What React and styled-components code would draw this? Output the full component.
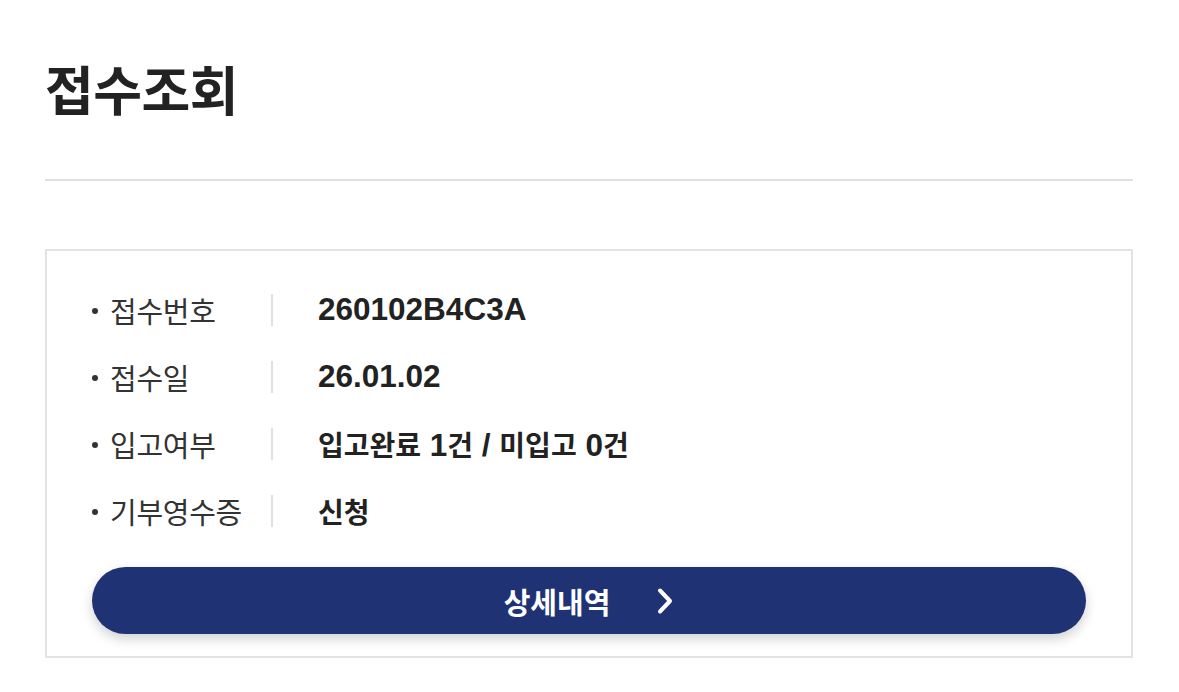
import React from "react";
import styled, { createGlobalStyle } from "styled-components";

const GlobalStyle = createGlobalStyle`
  html, body { margin: 0; padding: 0; background: #fff; }
  body {
    font-family: "Liberation Sans", "Noto Sans CJK KR", sans-serif;
    color: #222;
    -webkit-font-smoothing: antialiased;
  }
  * { box-sizing: border-box; }
`;

const Page = styled.main`
  width: 1179px;
  padding: 0 46px 0 45px;
`;

const Title = styled.h1`
  margin: 0;
  padding-top: 58px;
  font-family: "Noto Sans CJK KR", sans-serif;
  font-size: 53px;
  line-height: 61px;
  font-weight: 700;
  letter-spacing: -0.5px;
  color: #222;
`;

const Divider = styled.hr`
  margin: 60px 0 0;
  border: 0;
  height: 2px;
  background: #e1e1e1;
`;

const Card = styled.section`
  margin-top: 68px;
  border: 2px solid #e3e3e3;
  padding: 25px 45px 22px;
`;

const InfoList = styled.dl`
  margin: 0 0 0 -1px;
  display: flex;
  flex-direction: column;
`;

const Row = styled.div`
  display: grid;
  grid-template-columns: 180px 2px 1fr;
  align-items: center;
  height: 67px;
`;

const Label = styled.dt`
  display: flex;
  align-items: center;
  gap: 12px;
  font-family: "Noto Sans CJK KR", sans-serif;
  font-size: 29px;
  font-weight: 400;
  letter-spacing: -0.3px;
  color: #333;
  padding-left: 1px;

  &::before {
    content: "";
    flex: none;
    width: 6px;
    height: 6px;
    border-radius: 50%;
    background: #333;
    margin-top: 3px;
  }
`;

const Sep = styled.span`
  width: 2px;
  height: 32px;
  background: #e0e0e0;
`;

const Value = styled.dd`
  margin: 0 0 0 45px;
  font-family: "Liberation Sans", "Noto Sans CJK KR", sans-serif;
  font-size: 31.5px;
  font-weight: 700;
  color: #222;
  white-space: pre;
`;

const Ko = styled.span`
  font-family: "Noto Sans CJK KR", sans-serif;
  font-size: 28px;
`;

const DetailButton = styled.button`
  margin-top: 23px;
  width: 100%;
  height: 67px;
  border: 0;
  border-radius: 34px;
  background: #1f3374;
  box-shadow: 0 5px 12px rgba(0, 0, 0, 0.18);
  display: flex;
  align-items: center;
  justify-content: center;
  gap: 46px;
  color: #fff;
  font-family: "Noto Sans CJK KR", sans-serif;
  font-size: 29px;
  font-weight: 700;
  cursor: pointer;
`;

const Chevron = () => (
  <svg width="18" height="28" viewBox="0 0 18 28" fill="none">
    <polyline
      points="4,3.5 14,14 4,24.5"
      stroke="#fff"
      strokeWidth="4"
      strokeLinecap="round"
      strokeLinejoin="round"
    />
  </svg>
);

const rows = [
  { label: "접수번호", value: "260102B4C3A" },
  { label: "접수일", value: "26.01.02" },
  {
    label: "입고여부",
    value: (
      <>
        <Ko>입고완료</Ko> 1<Ko>건</Ko> / <Ko>미입고</Ko> 0<Ko>건</Ko>
      </>
    ),
  },
  { label: "기부영수증", value: <Ko>신청</Ko> },
];

export default function App() {
  return (
    <Page>
      <GlobalStyle />
      <Title>접수조회</Title>
      <Divider />
      <Card>
        <InfoList>
          {rows.map((r) => (
            <Row key={r.label}>
              <Label>{r.label}</Label>
              <Sep />
              <Value>{r.value}</Value>
            </Row>
          ))}
        </InfoList>
        <DetailButton type="button">
          <span>상세내역</span>
          <Chevron />
        </DetailButton>
      </Card>
    </Page>
  );
}
